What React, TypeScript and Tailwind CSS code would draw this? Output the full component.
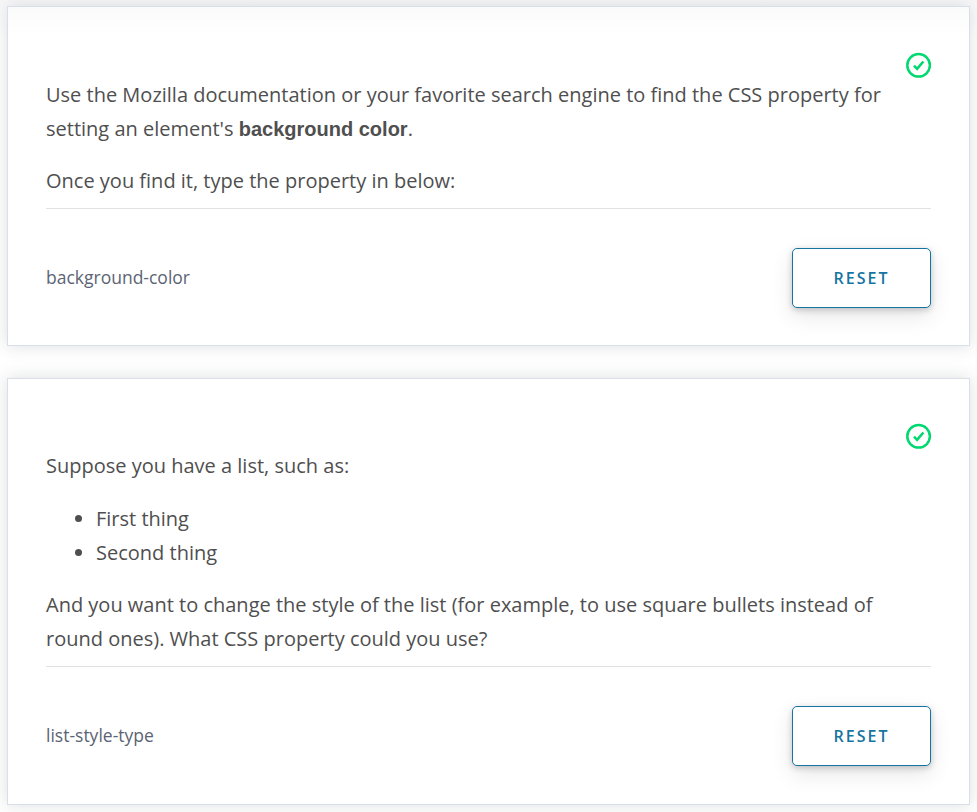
import type { ReactNode } from "react";

function CheckIcon() {
  return (
    <svg className="h-[26px] w-[26px]" viewBox="0 0 26 26" fill="none" stroke="#02d870" strokeWidth="2.5">
      <circle cx="13.6" cy="13.3" r="11.3" />
      <path d="M9 13.7l3.1 3.1 6.3-7.3" strokeWidth="2.6" />
    </svg>
  );
}

function Card({ children, answer, className }: { children: ReactNode; answer: string; className: string }) {
  return (
    <section className={`flex flex-col border border-[#d8dfe8] px-[38px] shadow-[0_0_16px_rgba(46,61,73,0.17)] ${className}`}>
      <div className="flex h-[26px] justify-end">
        <CheckIcon />
      </div>
      <div className="border-b border-[#dfe1e3] pb-[10px] text-[20px] leading-[34px] text-[#4f4f4f]">{children}</div>
      <div className="mt-[39px] flex h-[60px] items-center justify-between">
        <span className="pb-[2px] text-[17.5px] text-[#5b6474]">{answer}</span>
        <button className="h-[60px] w-[139px] rounded-[5px] border border-[#1675a0] bg-white text-[16px] font-semibold tracking-[2.05px] text-[#1675a0] shadow-[0_2px_6px_rgba(0,0,0,0.2),0_8px_22px_rgba(0,0,0,0.1)]">
          RESET
        </button>
      </div>
    </section>
  );
}

export default function App() {
  return (
    <main className="flex h-[812px] w-[977px] flex-col gap-[32px] overflow-hidden bg-linear-to-b from-[#f8f8f9] to-white to-[38px] px-[7px] pt-[6px] font-['Open_Sans',sans-serif]">
      <Card answer="background-color" className="h-[340px] bg-linear-to-b from-[#fafafb] to-white to-[30px] pt-[45px]">
        <p className="whitespace-nowrap">
          Use the Mozilla documentation or your favorite search engine to find the CSS property for
          <br />
          setting an element's <strong className="font-['Liberation_Sans',sans-serif] font-bold">background color</strong>.
        </p>
        <p className="mt-[18px]">Once you find it, type the property in below:</p>
      </Card>
      <Card answer="list-style-type" className="h-[427px] bg-white pt-[44px]">
        <p>Suppose you have a list, such as:</p>
        <ul className="mt-[19px] list-disc pl-[50px]">
          <li>First thing</li>
          <li>Second thing</li>
        </ul>
        <p className="mt-[18px] whitespace-nowrap">
          And you want to change the style of the list (for example, to use square bullets instead of
          <br />
          round ones). What CSS property could you use?
        </p>
      </Card>
    </main>
  );
}
